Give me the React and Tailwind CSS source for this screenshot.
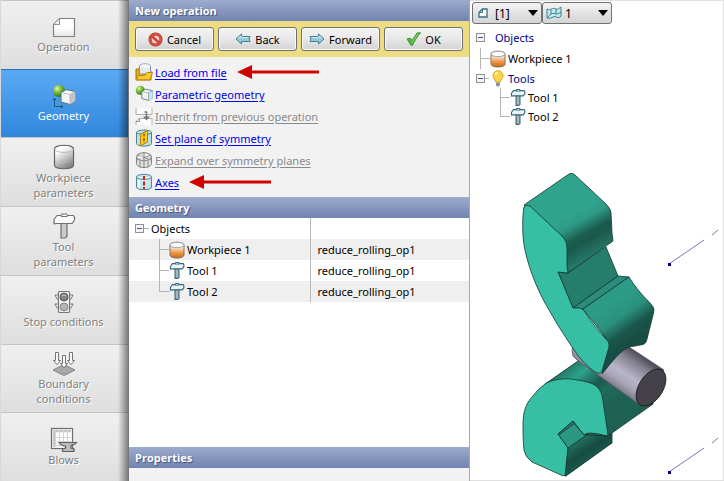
import React from "react";

/* ---------- icons ---------- */

function PageIcon() {
  return (
    <svg width="24" height="24" viewBox="0 0 24 24">
      <defs>
        <linearGradient id="page" x1="0" y1="0" x2="0" y2="1">
          <stop offset="0" stopColor="#fff" />
          <stop offset="0.5" stopColor="#fff" />
          <stop offset="1" stopColor="#e4e4e4" />
        </linearGradient>
      </defs>
      <path d="M7.5 3.5H22.5V21.5H1.5V9.5Z" fill="url(#page)" stroke="#808080" strokeWidth="1.2" />
      <path d="M7.5 3.5V9.5H1.5Z" fill="#eee" stroke="#909090" />
    </svg>
  );
}

function BallCubeIcon({ size, pale }) {
  return (
    <svg width={size} height={size} viewBox="0 0 24 24">
      <defs>
        <radialGradient id="ball" cx="0.35" cy="0.3" r="0.7">
          <stop offset="0" stopColor="#e4f5b8" />
          <stop offset="0.4" stopColor="#8cc63c" />
          <stop offset="1" stopColor="#2f7a12" />
        </radialGradient>
      </defs>
      {!pale && (
        <g stroke="#1f5a7a" fill="none">
          <path d="M2.500 15V22.500H10" />
          <path d="M1 16.500L2.500 14L4 16.500M8.500 21L11 22.500L8.500 24" />
        </g>
      )}
      <circle cx="7" cy="7" r="6" fill="url(#ball)" />
      <path d="M9 8.500L14 5.500L23.500 7.500V17L18 20.500L9 18Z" fill="#f4f4f4" stroke="#477a88" strokeWidth="1.100" />
      <path d="M18 10.500L23.500 7.500V17L18 20.500Z" fill={pale ? "#cde5ea" : "#c4c4c4"} />
      <path d="M9 8.500L18 10.500V20.500M18 10.500L23.500 7.500" fill="none" stroke={pale ? "#5b8f9b" : "#b4b4b4"} strokeWidth="0.800" />
    </svg>
  );
}

function GrayCylinderIcon() {
  return (
    <svg width="24" height="26" viewBox="0 0 24 26">
      <defs>
        <linearGradient id="gcyl" x1="0" y1="0" x2="0.5" y2="1">
          <stop offset="0.3" stopColor="#fff" />
          <stop offset="1" stopColor="#8a8a8a" />
        </linearGradient>
      </defs>
      <path d="M2.500 5V21C2.500 26 21.500 26 21.500 21V5C21.500 0 2.500 0 2.500 5Z" fill="url(#gcyl)" stroke="#666" strokeWidth="1.200" />
      <path d="M2.500 5C2.500 9.500 21.500 9.500 21.500 5" fill="none" stroke="#bbb" />
    </svg>
  );
}

function HammerIcon({ width, height, color }) {
  const teal = color === "teal";
  const stroke = teal ? "#35697a" : "#707070";
  return (
    <svg width={width} height={height} viewBox="0 0 24 26">
      <path d="M9 10H15V23.500L13 25H9Z" fill={teal ? "#a9b6ba" : "#c9c9c9"} stroke={stroke} strokeWidth={teal ? 1.7 : 1.2} />
      <path d="M5 2.500H9L10 1H14.500L15.500 2.500H21.500L22.500 4V7L20 10.500H4L2 11V6.500Z" fill={teal ? "#eaf5f8" : "#fafafa"} stroke={stroke} strokeWidth={teal ? 1.7 : 1.2} strokeLinejoin="round" />
      <path d="M9 3.500H15.500" stroke={stroke} />
    </svg>
  );
}

function TrafficIcon() {
  return (
    <svg width="24" height="24" viewBox="0 0 24 24">
      <path d="M7 5H3L5 9H7M17 5H21L19 9H17M7 14H3L5 18H7M17 14H21L19 18H17" fill="#eee" stroke="#777" />
      <rect x="6.500" y="1.500" width="11" height="21" rx="1" fill="#f6f6f6" stroke="#777" strokeWidth="1.200" />
      <circle cx="12" cy="7" r="4" fill="#858585" stroke="#555" />
      <circle cx="12" cy="17" r="4" fill="#b4b4b4" stroke="#888" />
      <path d="M9.500 6a3 2 0 0 1 5 0" stroke="#ccc" fill="none" />
    </svg>
  );
}

function BoundaryIcon() {
  return (
    <svg width="24" height="25" viewBox="0 0 24 25">
      <path d="M12 13.500L23 19L12 24.500L1 19Z" fill="#a8a8a8" stroke="#858585" />
      <g fill="#fff" stroke="#747474">
        <path d="M3.500 1.500H6.500V9.500H8.500L5 13.500L1.500 9.500H3.500Z" />
        <path d="M17.500 1.500H20.500V9.500H22.500L19 13.500L15.500 9.500H17.500Z" />
        <path d="M10.500 4.500H13.500V12.500H15.500L12 17L8.500 12.500H10.500Z" />
      </g>
    </svg>
  );
}

function BlowsIcon() {
  return (
    <svg width="28" height="25" viewBox="0 0 28 25">
      <rect x="1.500" y="1.500" width="21" height="20" fill="#fff" stroke="#6b6b6b" strokeWidth="1.200" />
      <path d="M3 4H21M4 3V20" stroke="#c4c4c4" strokeWidth="2.500" />
      <path d="M3 10.500H21M3 14.500H21M3 18.500H21M5.500 3V20M9.500 3V20M13.500 3V20M17.500 3V20" stroke="#d4d4d4" />
      <path d="M9 15.500H26.500C25 18 22 18 21 18.500V21L24 22V24.500H12.500V22L15.500 21V19C12 19 10.500 17.500 9 15.500Z" fill="#bcbcbc" stroke="#5f5f5f" strokeWidth="1.200" />
    </svg>
  );
}

function CancelIcon() {
  return (
    <svg width="15" height="15" viewBox="0 0 15 15">
      <circle cx="7.500" cy="7.500" r="5.500" fill="#f3d4cf" stroke="#a52a20" strokeWidth="3" />
      <circle cx="7.500" cy="7.500" r="5.500" fill="none" stroke="#dc5043" strokeWidth="2" />
      <path d="M3.700 4L11.300 11" stroke="#d0453a" strokeWidth="2.500" />
    </svg>
  );
}

function ArrowIcon({ flip }) {
  return (
    <svg width="16" height="12" viewBox="0 0 16 12" className={flip ? "-scale-x-100" : ""}>
      <path d="M1 6L6.500 1V3.500H15L14 6L15 8.500H6.500V11Z" fill="#93ccd8" stroke="#477e8c" strokeLinejoin="round" />
      <path d="M3 5.500L6 3V4.500H13.500" fill="none" stroke="#d3edf2" />
    </svg>
  );
}

function CheckIcon() {
  return (
    <svg width="15" height="14" viewBox="0 0 15 14">
      <path d="M1 7L4 6L6 8.500L11 1L14.500 .7C11 5 8.500 9 6.500 13.300H5Z" fill="#53b93f" stroke="#31842a" strokeWidth="0.800" />
      <path d="M6 10.500L12 2" stroke="#8fdd74" fill="none" />
    </svg>
  );
}

function FolderIcon() {
  return (
    <svg width="18" height="18" viewBox="0 0 18 18">
      <path d="M1 17V6H6L7 8H16V17Z" fill="#e0a91f" stroke="#a8790b" />
      <path d="M4.500 3V11H15.500V3C15.500 .2 4.500 .2 4.500 3Z" fill="#e5e9eb" stroke="#8597a0" />
      <ellipse cx="10" cy="3" rx="5" ry="1.700" fill="#fafafa" />
      <path d="M1 16.800L3.500 12.500H10L12 9.500H17.500L15 16.800Z" fill="#fbc92e" stroke="#b98711" strokeLinejoin="round" />
    </svg>
  );
}

function InheritIcon() {
  return (
    <svg width="18" height="19" viewBox="0 0 18 19">
      <path d="M1 1V7.500H17V1" fill="#fbfbfb" stroke="#b0b0b0" />
      <path d="M1 18V14.500L4 11.500H17V18" fill="#fbfbfb" stroke="#b0b0b0" />
      <path d="M4.500 11.500V14.500H1" fill="none" stroke="#8a8a8a" />
      <path d="M9.500 5H11.500V12" stroke="#777" fill="none" strokeWidth="1.500" />
      <path d="M8 9.500H15L11.500 13.500Z" fill="#777" />
    </svg>
  );
}

function PlaneIcon() {
  return (
    <svg width="18" height="18" viewBox="0 0 18 18">
      <path d="M1.500 3.500V14.500C1.500 18 16.500 18 16.500 14.500V3.500C16.500 .2 1.500 .2 1.500 3.500Z" fill="#b9e0e9" stroke="#4b8493" />
      <path d="M1.500 3.500C1.500 6 16.500 6 16.500 3.500" stroke="#4b8493" fill="none" />
      <path d="M5.500 5L12.500 1.500V13L5.500 16.800Z" fill="#fac71f" stroke="#b58511" />
      <path d="M9 4.500V14" stroke="#83600b" strokeWidth="1.500" strokeDasharray="3 1.500" />
    </svg>
  );
}

function ExpandIcon() {
  return (
    <svg width="18" height="18" viewBox="0 0 18 18">
      <path d="M1.500 6V12.500C2 18 16 18 16.500 12.500V6C16 .2 2 .2 1.500 6Z" fill="#dedede" stroke="#858585" />
      <path d="M1.500 6C2 11 16 11 16.500 6M9 1.500V16.500M2 4L16 9M16 4L2 9M5 9.500V16M13 9.500V16" stroke="#8b8b8b" fill="none" />
      <path d="M4 5L8 6L7 8L3.500 7ZM10 3L14 4L10 5.500Z" fill="#fff" />
    </svg>
  );
}

function AxesIcon() {
  return (
    <svg width="18" height="18" viewBox="0 0 18 18">
      <path d="M1.500 4V14C1.500 17.500 16.500 17.500 16.500 14V4C16.500 .5 1.500 .5 1.500 4Z" fill="#cae6ed" stroke="#4e8796" />
      <path d="M1.500 4C1.500 7 16.500 7 16.500 4" stroke="#4e8796" fill="#eef7f9" />
      <path d="M4 7V15" stroke="#f4fbfd" strokeWidth="2" />
      <path d="M9 3V16" stroke="#c3281b" strokeWidth="2" strokeDasharray="4 1.500" />
    </svg>
  );
}

function WorkpieceIcon() {
  return (
    <svg width="16" height="18" viewBox="0 0 16 18" className="shrink-0">
      <defs>
        <linearGradient id="wp" x1="0" y1="0" x2="0" y2="1">
          <stop offset="0.300" stopColor="#f8efe8" />
          <stop offset="0.650" stopColor="#ec9a4b" />
          <stop offset="1" stopColor="#c96a12" />
        </linearGradient>
      </defs>
      <path d="M1 4V14C1 18 15 18 15 14V4C15 .3 1 .3 1 4Z" fill="url(#wp)" stroke="#8c6a50" />
      <ellipse cx="8" cy="4" rx="7" ry="2.700" fill="#fbfbfb" stroke="#9aa5aa" />
    </svg>
  );
}

function BulbIcon() {
  return (
    <svg width="12" height="17" viewBox="0 0 12 17" className="shrink-0">
      <path d="M6 .700A5 5 0 0 0 1 6C1 8.500 3.500 9.500 3.700 12H8.300C8.500 9.500 11 8.500 11 6A5 5 0 0 0 6 .7Z" fill="#fcd54a" stroke="#dba520" />
      <path d="M3.500 5a2.500 2.500 0 0 1 2.500-2.500" stroke="#fff6cf" strokeWidth="1.500" fill="none" />
      <path d="M4 12.500H8V15L7 16.500H5L4 15Z" fill="#8b9398" />
    </svg>
  );
}

function RedArrow({ length, className }) {
  return (
    <svg width={length} height="14" viewBox={`0 0 ${length} 14`} className={className}>
      <path d={`M0 7L15 0V5.500H${length}V8.500H15V14Z`} fill="#d10000" />
    </svg>
  );
}

/* ---------- sidebar ---------- */

const steps = [
  { lines: ["Operation"], icon: <PageIcon /> },
  { lines: ["Geometry"], icon: <BallCubeIcon size={24} />, active: true },
  { lines: ["Workpiece", "parameters"], icon: <GrayCylinderIcon /> },
  { lines: ["Tool", "parameters"], icon: <HammerIcon width={24} height={26} /> },
  { lines: ["Stop conditions"], icon: <TrafficIcon /> },
  { lines: ["Boundary", "conditions"], icon: <BoundaryIcon /> },
  { lines: ["Blows"], icon: <BlowsIcon /> },
];

function Sidebar() {
  return (
    <nav className="relative flex w-32 shrink-0 flex-col border-l border-[#d8d8d8]">
      {steps.map((s) => (
        <button
          key={s.lines.join(" ")}
          type="button"
          className={
            "flex flex-1 flex-col items-center justify-center border-t pr-0.5 leading-[15px] " +
            (s.active
              ? "border-[#2c6fb5] bg-linear-to-b from-[#5aa9f3] to-[#2f87dc] text-white"
              : "border-[#c4c4c4] bg-linear-to-b from-[#f0f0f0] to-[#dedede] text-[#808080] text-shadow-[1px_1px_0_#ffffff]")
          }
        >
          {s.icon}
          {s.lines.map((l) => (
            <span key={l}>{l}</span>
          ))}
        </button>
      ))}
      <div className="pointer-events-none absolute inset-y-0 right-0 w-2.5 bg-linear-to-r from-transparent to-black/45" />
    </nav>
  );
}

/* ---------- operation panel ---------- */

function Heading({ children }) {
  return (
    <h2 className="h-[21px] shrink-0 bg-linear-to-b from-[#9dabcd] to-[#7184b0] pl-1.5 font-['Open_Sans','Noto_Sans',sans-serif] leading-[21px] font-bold text-white text-shadow-[1px_1px_1px_#44557f]">
      {children}
    </h2>
  );
}

function ActionButton({ icon, children }) {
  return (
    <button
      type="button"
      className="flex h-6 flex-1 items-center justify-center gap-1 rounded-[3px] border border-[#707070] bg-linear-to-b from-[#f3f3f3] via-[#e8e8e8] to-[#d2d2d2] text-black inset-shadow-[0_0_0_1px_#fafafa]"
    >
      {icon}
      {children}
    </button>
  );
}

const actions = [
  { label: "Load from file", icon: <FolderIcon />, arrow: 82 },
  { label: "Parametric geometry", icon: <BallCubeIcon size={18} pale /> },
  { label: "Inherit from previous operation", icon: <InheritIcon />, disabled: true },
  { label: "Set plane of symmetry", icon: <PlaneIcon /> },
  { label: "Expand over symmetry planes", icon: <ExpandIcon />, disabled: true },
  { label: "Axes", icon: <AxesIcon />, arrow: 82 },
];

function Toggle() {
  return (
    <button
      type="button"
      aria-label="Collapse"
      className="flex size-[9px] shrink-0 items-center justify-center border border-[#919191] bg-[#f4f4f4]"
    >
      <span className="h-px w-[5px] bg-[#3a55a5]" />
    </button>
  );
}

function Branch({ last }) {
  return (
    <span className="flex w-2.5 shrink-0 flex-col self-stretch">
      <span className="flex-1 border-b border-l border-[#b4b4b4]" />
      <span className={"flex-1 " + (last ? "" : "border-l border-[#b4b4b4]")} />
    </span>
  );
}

const objects = [
  { name: "Workpiece 1", source: "reduce_rolling_op1", workpiece: true },
  { name: "Tool 1", source: "reduce_rolling_op1" },
  { name: "Tool 2", source: "reduce_rolling_op1" },
];

function ObjectTable() {
  return (
    <table className="w-full table-fixed border-collapse">
      <tbody>
        <tr className="h-[21px]">
          <td className="w-[181px] border-r border-[#b8b8b8] p-0">
            <div className="flex h-[21px] items-center pl-1.5">
              <Toggle />
              <span className="mr-0.5 h-px w-[5px] bg-[#b4b4b4]" />
              Objects
            </div>
          </td>
          <td className="p-0" />
        </tr>
        {objects.map((o, i) => (
          <tr key={o.name} className="h-[21px] odd:bg-white even:bg-[#efefef]">
            <td className="border-r border-[#b8b8b8] p-0">
              <div className="flex h-[21px] items-center pl-[30px]">
                <Branch last={i === objects.length - 1} />
                <span className="mr-0.5 flex w-4 justify-center">
                  {o.workpiece ? <WorkpieceIcon /> : <HammerIcon width={16} height={17} color="teal" />}
                </span>
                {o.name}
              </div>
            </td>
            <td className="p-0 pl-[7px]">{o.source}</td>
          </tr>
        ))}
      </tbody>
    </table>
  );
}

function OperationPanel() {
  return (
    <section className="flex w-[342px] shrink-0 flex-col border-r border-l border-r-[#a8a8a8] border-l-[#777777] bg-white">
      <Heading>New operation</Heading>
      <div className="flex gap-1 bg-[#eedc82] px-1.5 py-1.5">
        <ActionButton icon={<CancelIcon />}>Cancel</ActionButton>
        <ActionButton icon={<ArrowIcon />}>Back</ActionButton>
        <ActionButton icon={<ArrowIcon flip />}>Forward</ActionButton>
        <ActionButton icon={<CheckIcon />}>OK</ActionButton>
      </div>
      <ul className="bg-[#f2f2f2] pt-1 pb-1">
        {actions.map((a) => (
          <li key={a.label} className="flex h-[22px] items-center pl-1.5">
            {a.icon}
            <a
              href="#"
              aria-disabled={a.disabled}
              className={"ml-0.5 underline underline-offset-2 " + (a.disabled ? "text-[#8a8a8a]" : "text-[#0000ee]")}
            >
              {a.label}
            </a>
            {a.arrow && <RedArrow length={a.arrow} className="ml-2.5" />}
          </li>
        ))}
      </ul>
      <Heading>Geometry</Heading>
      <div className="flex-1">
        <ObjectTable />
      </div>
      <Heading>Properties</Heading>
      <div className="h-[13px] bg-[#f2f2f2]" />
    </section>
  );
}

/* ---------- viewer ---------- */

function Picker({ label, value, icon }) {
  return (
    <label className="relative flex h-[22px] w-[70px] items-center">
      <select
        aria-label={label}
        defaultValue={value}
        className="h-full w-full appearance-none rounded-[3px] border border-[#707070] bg-linear-to-b from-[#f3f3f3] to-[#d4d4d4] pl-[22px] text-[12px] text-black"
      >
        <option>{value}</option>
      </select>
      <span className="pointer-events-none absolute left-1">{icon}</span>
      <svg className="pointer-events-none absolute right-1" width="10" height="6" viewBox="0 0 10 6">
        <path d="M0 0H10L5 6Z" fill="#000" />
      </svg>
    </label>
  );
}

function SmallPage() {
  return (
    <svg width="14" height="10" viewBox="0 0 14 10">
      <path d="M6.500 1H11V9H3V4.500Z" fill="#fff" stroke="#33707e" strokeWidth="1.300" />
      <path d="M6.500 1V4.500H3" fill="none" stroke="#33707e" />
    </svg>
  );
}

function SurfaceIcon() {
  return (
    <svg width="16" height="14" viewBox="0 0 16 14">
      <path d="M1 3C5 5 6 1 10 3C12 4 13 2 15 1V10C12 14 10 9 7 11C4 13 3 12 1 12Z" fill="#c5e7ee" stroke="#3f8090" />
      <path d="M1 12L5 8C8 6 10 10 15 6M5 3.500V8M10 3V8.500" fill="none" stroke="#3f8090" />
    </svg>
  );
}

function ObjectTree() {
  return (
    <div className="pt-[3px] pl-[6px]">
      <div className="flex h-[21px] items-center gap-[10px] text-[#00008b]">
        <Toggle />
        Objects
      </div>
      <div className="flex h-[21px] items-center pl-1">
        <Branch />
        <WorkpieceIcon />
        <span className="ml-0.5">Workpiece 1</span>
      </div>
      <div className="flex h-[19px] items-center text-[#00008b]">
        <Toggle />
        <span className="mr-[3px] h-px w-1 bg-[#b4b4b4]" />
        <BulbIcon />
        <span className="ml-1">Tools</span>
      </div>
      {["Tool 1", "Tool 2"].map((t, i) => (
        <div key={t} className="flex h-[19px] items-center pl-6">
          <Branch last={i === 1} />
          <HammerIcon width={16} height={17} color="teal" />
          <span className="ml-0.5">{t}</span>
        </div>
      ))}
    </div>
  );
}

function Scene() {
  return (
    <svg viewBox="470 126 253 354" className="w-full" role="img" aria-label="Rolling tools and workpiece">
      <defs>
        <linearGradient id="block" gradientUnits="userSpaceOnUse" x1="578" y1="212" x2="600" y2="251">
          <stop offset="0" stopColor="#2fa38c" />
          <stop offset="0.200" stopColor="#2d9a85" />
          <stop offset="0.500" stopColor="#1c5d50" />
          <stop offset="0.650" stopColor="#1b584c" />
          <stop offset="1" stopColor="#257766" />
        </linearGradient>
        <linearGradient id="arm" gradientUnits="userSpaceOnUse" x1="612" y1="302" x2="637" y2="338">
          <stop offset="0" stopColor="#2d9c86" />
          <stop offset="0.400" stopColor="#2a917d" />
          <stop offset="0.720" stopColor="#1a564a" />
          <stop offset="1" stopColor="#184d43" />
        </linearGradient>
        <linearGradient id="rod" gradientUnits="userSpaceOnUse" x1="640" y1="354" x2="617" y2="388">
          <stop offset="0" stopColor="#4b4954" />
          <stop offset="0.250" stopColor="#85828f" />
          <stop offset="0.600" stopColor="#b8b5cb" />
          <stop offset="0.800" stopColor="#aaa7bb" />
          <stop offset="1" stopColor="#817e8c" />
        </linearGradient>
        <linearGradient id="base" gradientUnits="userSpaceOnUse" x1="563" y1="369" x2="601" y2="415">
          <stop offset="0" stopColor="#237564" />
          <stop offset="0.250" stopColor="#2fa18b" />
          <stop offset="0.380" stopColor="#238070" />
          <stop offset="0.550" stopColor="#1b594c" />
          <stop offset="0.700" stopColor="#206b5c" />
          <stop offset="1" stopColor="#1e6153" />
        </linearGradient>
        <linearGradient id="under" gradientUnits="userSpaceOnUse" x1="581" y1="438" x2="596" y2="461">
          <stop offset="0" stopColor="#217061" />
          <stop offset="0.500" stopColor="#174b40" />
          <stop offset="1" stopColor="#1d5d50" />
        </linearGradient>
      </defs>

      <g stroke="#12362f" strokeWidth="0.800" strokeLinejoin="round">
        {/* lower die */}
        <path d="M545 384L578 361L600 365L653 397V404L612 433L608 435L590 440L570 420Z" fill="url(#base)" />
        <path d="M523 425C523 411 526 404 532 397Q538 389 545 384C550 380 566 377 577 380C589 382 596 384 599 389Q602 392 603 401L608 435Q607 437 603 435Q595 433 590 433Q586 433 584 435L573 421L558 434L568 448L566 474Q565 477 561 475L532 462Q525 457 524 450Q523 443 523 425Z" fill="#37bfa5" />
        <path d="M568 448L586 435L607 436L612 433V443L566 476H565Z" fill="url(#under)" />
        <path d="M558 434L574 423L584 435L588 434L568 448Z" fill="#2b9782" />
        <path d="M558 434L573 421L575 423L560 434Z" fill="#237966" />

        {/* workpiece */}
        <path d="M573 345Q571 350 573 356L577 360L640 405L664 370L629 347L600 334Z" fill="url(#rod)" stroke="#5a5763" />
        <ellipse cx="651" cy="387.500" rx="12" ry="20.500" transform="rotate(32 651 387.5)" fill="#444149" stroke="#19181c" />

        {/* upper die */}
        <path d="M524 205L569 174Q572 172 575 175L606 204Q611 209 611 213L612 233L613 241L568 273L565 240Z" fill="url(#block)" />
        <path d="M558 272L568 273L606 247L618 276L573 308Z" fill="#257d6b" />
        <path d="M573 308L618 276L629 277L583 309Z" fill="#2a8d79" />
        <path d="M583 309L629 277Q636 289 650 303Q654 307 654 310L653 315L647 339Q646 345 640 345L635 346Q628 346 620 353Q612 361 602 374L609 342Z" fill="url(#arm)" />
        <path d="M524 207Q526 204 530 206L563 237Q567 241 567 248L567 266L568 273L558 272L573 308L580 308Q584 309 587 315Q593 325 606 339Q610 342 609 347L602 371Q600 375 595 372Q583 364 572 347Q557 325 545 303C532 279 524 253 523 236Q522 218 524 207Z" fill="#37bfa5" />
      </g>

      {/* axes */}
      <g stroke="#7777bb" strokeWidth="1">
        <path d="M669 264L704 240M712 235L718 230M669 472L704 448M712 443L718 438" />
      </g>
      <path d="M668 263h3v3h-3zM668 471h3v3h-3z" fill="#00008b" />
    </svg>
  );
}

export default function App() {
  return (
    <div className="flex min-h-screen bg-white font-['Noto_Sans','Open_Sans',sans-serif] text-[11px] leading-[15px] text-black">
      <Sidebar />
      <OperationPanel />
      <main className="flex min-w-0 flex-1 flex-col border-t border-r border-b border-[#e0e0e0] bg-white">
        <div className="flex pt-px pl-[2px]">
          <Picker label="Record" value="[1]" icon={<SmallPage />} />
          <Picker label="Surface" value="1" icon={<SurfaceIcon />} />
        </div>
        <ObjectTree />
        <Scene />
      </main>
    </div>
  );
}
